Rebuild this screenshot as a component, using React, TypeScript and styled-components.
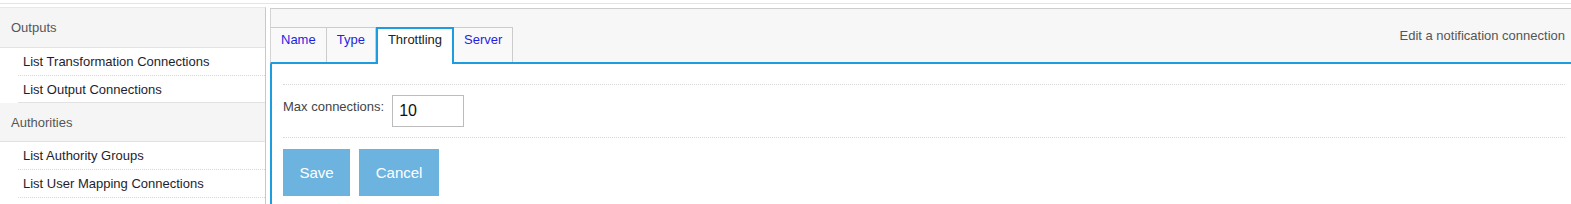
import { createGlobalStyle, styled } from "styled-components";

const GlobalStyle = createGlobalStyle`
  html, body {
    margin: 0;
    padding: 0;
    background: #ffffff;
    font-family: "Liberation Sans", Arial, sans-serif;
    font-size: 13px;
  }
`;

const TopRule = styled.div`
  height: 3px;
  border-bottom: 1px solid #e4e4e4;
  margin-bottom: 3px;
`;

const Layout = styled.div`
  display: flex;
  align-items: stretch;
  height: calc(100vh - 7px);
`;

const Sidebar = styled.nav`
  width: 265px;
  flex: none;
  border-top: 1px solid #e8e8e8;
  border-right: 1px solid #c9c9c9;
`;

const Group = styled.div`
  &:not(:last-child) > a:last-child {
    height: 26px;
    border-bottom-style: solid;
    border-bottom-color: #e2e2e2;
  }
`;

const GroupHeader = styled.div<{ $first?: boolean }>`
  height: ${(p) => (p.$first ? "39px" : "38px")};
  display: flex;
  align-items: center;
  padding-left: 11px;
  background: #f5f5f5;
  border-bottom: 1px solid #e2e2e2;
  color: #555555;
`;

const NavItem = styled.a`
  display: flex;
  align-items: center;
  height: 27px;
  margin-left: 18px;
  padding-left: 5px;
  border-bottom: 1px dotted #d8d8d8;
  color: #1e1e2a;
  text-decoration: none;
`;

const Panel = styled.main`
  flex: 1;
  min-width: 0;
  margin-left: 4px;
  margin-top: 1px;
  display: flex;
  flex-direction: column;
`;

const PanelHeader = styled.div`
  display: flex;
  align-items: flex-end;
  justify-content: space-between;
  height: 53px;
  background: #f7f7f7;
  border-top: 1px solid #cccccc;
  border-left: 1px solid #d4d4d4;
  border-bottom: 2px solid #1c9de0;
`;

const Tabs = styled.div`
  display: flex;
  align-items: flex-end;
  align-self: flex-end;
  margin-bottom: -2px;
`;

const Tab = styled.a<{ $active?: boolean }>`
  box-sizing: border-box;
  height: ${(p) => (p.$active ? "37px" : "35px")};
  margin-bottom: ${(p) => (p.$active ? "0" : "2px")};
  padding: 3px 10px 0;
  line-height: 18px;
  background: ${(p) => (p.$active ? "#ffffff" : "#f9f9f9")};
  border: 1px solid #cccccc;
  border-left: none;
  border-bottom: none;
  color: #1f1fe0;
  text-decoration: none;
  cursor: pointer;

  ${(p) =>
    p.$active &&
    `
    border: 2px solid #1c9de0;
    border-bottom: none;
    padding: 2px 10px 0;
    color: #222222;
  `}
`;

const Title = styled.div`
  align-self: center;
  padding-right: 6px;
  font-size: 13px;
  color: #555555;
`;

const Content = styled.div`
  flex: 1;
  border-left: 2px solid #1c9de0;
  padding: 20px 6px 0 11px;
`;

const FormRow = styled.div`
  display: flex;
  align-items: flex-start;
  gap: 8px;
  padding: 10px 0;
  border-top: 1px dotted #d6d6d6;
  border-bottom: 1px dotted #d6d6d6;
`;

const Label = styled.label`
  padding-top: 4px;
  color: #444444;
`;

const Input = styled.input`
  box-sizing: border-box;
  width: 72px;
  height: 32px;
  padding: 0 6px;
  border: 1px solid #bcbcbc;
  font-family: "Liberation Sans", Arial, sans-serif;
  font-size: 16px;
  color: #111111;
  outline: none;
`;

const Actions = styled.div`
  display: flex;
  gap: 9px;
  padding-top: 11px;
`;

const Button = styled.button`
  height: 47px;
  padding: 0 16.5px;
  border: none;
  background: #6cb3e0;
  color: #ffffff;
  font-family: "Liberation Sans", Arial, sans-serif;
  font-size: 15px;
  cursor: pointer;
`;

const tabs = ["Name", "Type", "Throttling", "Server"];

export default function App() {
  return (
    <>
      <GlobalStyle />
      <TopRule />
      <Layout>
        <Sidebar>
          <Group>
            <GroupHeader $first>Outputs</GroupHeader>
            <NavItem>List Transformation Connections</NavItem>
            <NavItem>List Output Connections</NavItem>
          </Group>
          <Group>
            <GroupHeader>Authorities</GroupHeader>
            <NavItem>List Authority Groups</NavItem>
            <NavItem>List User Mapping Connections</NavItem>
          </Group>
        </Sidebar>
        <Panel>
          <PanelHeader>
            <Tabs>
              {tabs.map((t) => (
                <Tab key={t} $active={t === "Throttling"}>
                  {t}
                </Tab>
              ))}
            </Tabs>
            <Title>Edit a notification connection</Title>
          </PanelHeader>
          <Content>
            <FormRow>
              <Label>Max connections:</Label>
              <Input defaultValue="10" />
            </FormRow>
            <Actions>
              <Button>Save</Button>
              <Button>Cancel</Button>
            </Actions>
          </Content>
        </Panel>
      </Layout>
    </>
  );
}
